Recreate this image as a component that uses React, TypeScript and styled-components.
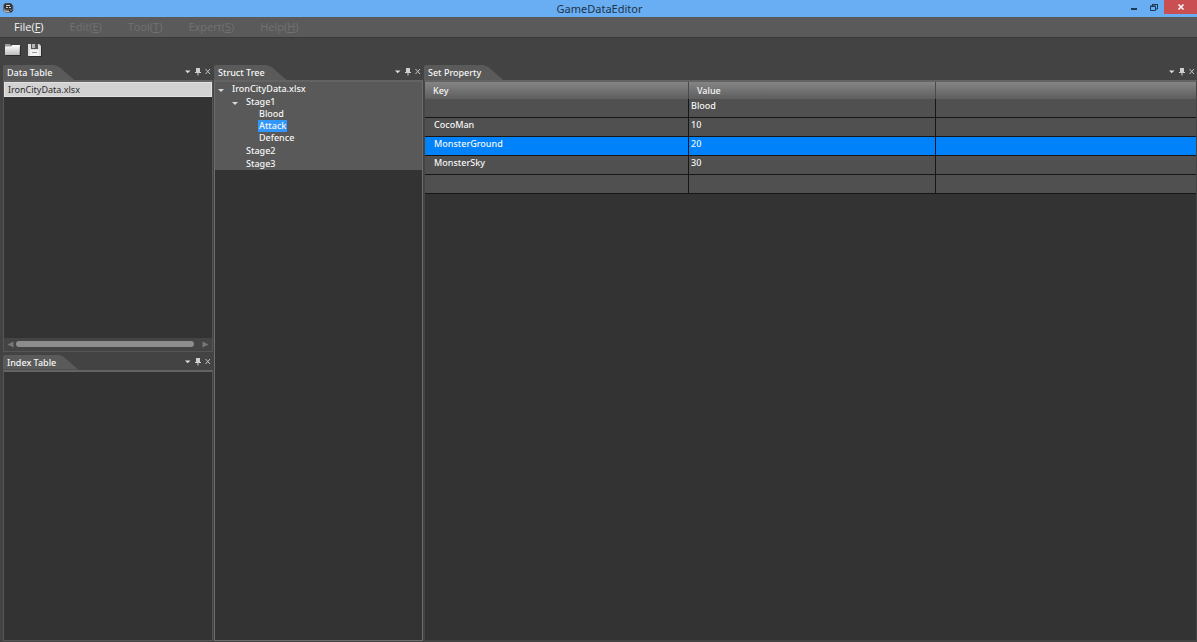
import React from "react";
import styled, { createGlobalStyle } from "styled-components";

const GlobalStyle = createGlobalStyle`
  *, *::before, *::after { box-sizing: border-box; }
  html, body { margin: 0; padding: 0; background: #434343; }
  body { font-family: "Noto Sans", "Open Sans", sans-serif; font-size: 9px; font-weight: 500; color: #f6f6f6; }
  button { font: inherit; color: inherit; background: none; border: 0; padding: 0; }
  ul { list-style: none; margin: 0; padding: 0; }
  svg { display: block; }
`;

const Window = styled.div`
  display: flex;
  flex-direction: column;
  min-height: 100vh;
  background: #434343;
`;

const TitleBar = styled.header`
  display: grid;
  grid-template-columns: 1fr auto 1fr;
  align-items: start;
  height: 17px;
  padding-left: 2px;
  background: #69aef2;
`;

const Title = styled.h1`
  margin: 0;
  font: 400 11px/17px "Noto Sans", "Open Sans", sans-serif;
  color: #1e3348;
`;

const WindowControls = styled.div`
  display: flex;
  justify-content: flex-end;
`;

const WindowButton = styled.button<{ $close?: boolean }>`
  display: flex;
  align-items: center;
  justify-content: center;
  width: ${(p) => (p.$close ? 33 : 20)}px;
  height: 14px;
  background: ${(p) => (p.$close ? "#c94f53" : "transparent")};
`;

const MenuBar = styled.nav`
  display: flex;
  align-items: center;
  gap: 26px;
  height: 21px;
  padding-left: 14px;
  background: #5a5a5a;
  border-bottom: 1px solid #3a3a3a;
`;

const MenuButton = styled.button`
  font: 500 11px/20px "Open Sans", "Noto Sans", sans-serif;
  color: #f4f4f4;
  &:disabled { color: #717171; font-weight: 400; }
`;

const ToolBar = styled.div`
  display: flex;
  align-items: center;
  gap: 5px;
  height: 24px;
  padding: 0 0 2px 4px;
`;

const ToolButton = styled.button`
  width: 17px;
  height: 17px;
`;

const Workspace = styled.main`
  flex: 1;
  display: grid;
  grid-template-columns: 210px 209px 1fr;
  column-gap: 1px;
  padding: 3px 0 1px 3px;
`;

const Dock = styled.div`
  display: flex;
  flex-direction: column;
  gap: 3px;
  min-width: 0;
`;

const PanelFrame = styled.section`
  flex: 1 1 0;
  display: flex;
  flex-direction: column;
  min-width: 0;
`;

const PanelHeader = styled.div`
  display: flex;
  align-items: center;
  justify-content: space-between;
  height: 15px;
`;

const Tab = styled.h2`
  margin: 0;
  padding: 0 22px 0 4px;
  font: 500 9px/15px "Noto Sans", "Open Sans", sans-serif;
  background: #5a5a5a;
  border-top-left-radius: 2px;
  clip-path: polygon(0 0, calc(100% - 20px) 0, calc(100% - 15px) 2px, 100% 100%, 0 100%);
`;

const PanelControls = styled.div`
  display: flex;
  gap: 1px;
  padding: 0 1px 2px 0;
`;

const PanelButton = styled.button`
  width: 9px;
  height: 9px;
`;

const PanelBody = styled.div<{ $edge: string }>`
  flex: 1;
  display: flex;
  flex-direction: column;
  border: 1px solid ${(p) => p.$edge};
  border-top: 2px solid #636363;
  background: #333333;
`;

const FileList = styled.ul`
  flex: 1;
`;

const FileButton = styled.button`
  display: block;
  width: 100%;
  height: 15px;
  padding-left: 3px;
  text-align: left;
  line-height: 14px;
  font-weight: 400;
  color: #2d2d2d;
  background: #d2d2d2;
  border: 1px solid #e2e2e2;
`;

const ScrollStrip = styled.div`
  display: flex;
  align-items: center;
  gap: 2px;
  height: 13px;
  padding: 0 3px;
  background: #444444;
`;

const ScrollArrow = styled.button`
  width: 7px;
  height: 7px;
`;

const ScrollTrack = styled.div`
  flex: 1;
  padding-right: 6px;
`;

const ScrollThumb = styled.div`
  height: 6px;
  border-radius: 3px;
  background: #8d8d8d;
`;

const Tree = styled.ul`
  background: #595959;
`;

const TreeRow = styled.div<{ $level: number }>`
  display: flex;
  align-items: center;
  gap: 6px;
  height: ${(p) => (p.$level === 2 ? 12 : 13)}px;
  padding-left: ${(p) => [2, 16, 29][p.$level]}px;
`;

const Expander = styled.button`
  width: 8px;
  height: 8px;
`;

const LeafSpacer = styled.span`
  width: 8px;
`;

const TreeLabel = styled.span<{ $selected?: boolean }>`
  padding: 0 1px;
  line-height: 12px;
  background: ${(p) => (p.$selected ? "#3197fd" : "transparent")};
`;

const Grid = styled.table`
  width: 100%;
  table-layout: fixed;
  border-collapse: separate;
  border-spacing: 0;
`;

const SizedColumn = styled.col<{ $width: number }>`
  width: ${(p) => p.$width}px;
`;

const HeadCell = styled.th`
  height: 17px;
  padding: 0 8px;
  text-align: left;
  font-weight: 500;
  line-height: 17px;
  background: linear-gradient(#858585, #5e5e5e);
  border-right: 1px solid #4a4a4a;
  &:last-child { border-right: 0; }
`;

const Row = styled.tr<{ $selected?: boolean }>`
  background: ${(p) => (p.$selected ? "#0082fb" : "#505050")};
`;

const Cell = styled.td<{ $indent?: boolean }>`
  height: 19px;
  padding: 0 0 0 ${(p) => (p.$indent ? 9 : 2)}px;
  vertical-align: top;
  line-height: 14px;
  border-right: 1px solid #161616;
  border-bottom: 1px solid #161616;
  &:last-child { border-right: 0; }
`;

const AppIcon = () => (
  <svg width="12" height="16" viewBox="0 0 12 16" aria-hidden="true">
    <path d="M3 3h6l2.500 3v4L9.500 13H4L1 11V5z" fill="#6d7379" />
    <path d="M3 3.500h6l1.500 2v4H4L2 8V5z" fill="#303236" />
    <path d="M4 5.500h4M4 7.500h2M7 7.500h2" stroke="#d2d4d6" fill="none" />
    <path d="M2 10.500l2 1h3" stroke="#b9bdc1" fill="none" />
    <path d="M7 10l2 2 2-2" stroke="#25282c" fill="none" />
  </svg>
);

const FolderIcon = () => (
  <svg width="17" height="17" viewBox="0 0 17 17" aria-hidden="true">
    <defs>
      <linearGradient id="folder" x1="0" y1="0" x2="0" y2="1">
        <stop offset="0" stopColor="#ffffff" />
        <stop offset="1" stopColor="#bdbdbd" />
      </linearGradient>
    </defs>
    <path d="M2 14.500h14.500V5" stroke="#2c2c2c" fill="none" />
    <path d="M1 3h5l1 1.500h9V14H1z" fill="#9a9a9a" />
    <path d="M1 5.500h6L8.500 4H16l-1 10H1z" fill="url(#folder)" />
  </svg>
);

const SaveIcon = () => (
  <svg width="17" height="17" viewBox="0 0 17 17" aria-hidden="true">
    <path d="M3 15.500h12.500V5" stroke="#2c2c2c" fill="none" />
    <path d="M2 3h11l2 2v10H2z" fill="#dedede" />
    <rect x="5" y="3" width="7" height="5" fill="#555555" />
    <rect x="6" y="3" width="3" height="4" fill="#b5b5b5" />
    <rect x="4" y="9" width="9" height="6" fill="#f2f2f2" />
    <path d="M6 11.500h5" stroke="#9b9b9b" />
  </svg>
);

const MinimizeIcon = () => (
  <svg width="8" height="10" viewBox="0 0 8 10" aria-hidden="true">
    <rect x="1" y="6" width="6" height="2" fill="#1d3a57" />
  </svg>
);

const RestoreIcon = () => (
  <svg width="10" height="9" viewBox="0 0 10 9" aria-hidden="true">
    <path d="M1.500 3.500h5v4h-5zM3.500 3V1.500h5V6H7" stroke="#1d3a57" fill="none" />
    <path d="M1 3h6M3 1.500h6" stroke="#1d3a57" />
  </svg>
);

const CloseIcon = () => (
  <svg width="8" height="8" viewBox="0 0 8 8" aria-hidden="true">
    <path d="M1.500 1.500l5 5M6.500 1.500l-5 5" stroke="#fff" strokeWidth="1.500" />
  </svg>
);

const ArrowDown = () => (
  <svg width="9" height="9" viewBox="0 0 9 9" aria-hidden="true">
    <path d="M2 3.500h5.500L4.700 6.300z" fill="#dedede" />
  </svg>
);

const PinIcon = () => (
  <svg width="9" height="9" viewBox="0 0 9 9" aria-hidden="true">
    <path d="M3 1h4v4h1v1H2V5h1zM4.500 6h1v2.500h-1z" fill="#cfcfcf" />
  </svg>
);

const SmallClose = () => (
  <svg width="9" height="9" viewBox="0 0 9 9" aria-hidden="true">
    <path d="M2.500 2l4.500 5M7 2L2.500 7" stroke="#c4c4c4" strokeWidth="1" />
  </svg>
);

const ExpanderIcon = () => (
  <svg width="8" height="8" viewBox="0 0 8 8" aria-hidden="true">
    <path d="M1 4h6L4 7z" fill="#d8d8d8" />
  </svg>
);

const SideArrow = ({ right }: { right?: boolean }) => (
  <svg width="7" height="7" viewBox="0 0 7 7" aria-hidden="true">
    <path d={right ? "M0.500 0.500l6 3-6 3z" : "M6.500 0.500l-6 3 6 3z"} fill="#777" />
  </svg>
);

const menus = [
  { name: "File", key: "F", enabled: true },
  { name: "Edit", key: "E", enabled: false },
  { name: "Tool", key: "T", enabled: false },
  { name: "Expert", key: "S", enabled: false },
  { name: "Help", key: "H", enabled: false },
];

const nodes = [
  { label: "IronCityData.xlsx", level: 0, open: true },
  { label: "Stage1", level: 1, open: true },
  { label: "Blood", level: 2 },
  { label: "Attack", level: 2, selected: true },
  { label: "Defence", level: 2 },
  { label: "Stage2", level: 1 },
  { label: "Stage3", level: 1 },
];

const rows = [
  { key: "", value: "Blood" },
  { key: "CocoMan", value: "10" },
  { key: "MonsterGround", value: "20", selected: true },
  { key: "MonsterSky", value: "30" },
  { key: "", value: "" },
];

interface PanelProps {
  title: string;
  edge?: string;
  children?: React.ReactNode;
}

const Panel = ({ title, edge = "#555555", children }: PanelProps) => (
  <PanelFrame aria-label={title}>
    <PanelHeader>
      <Tab>{title}</Tab>
      <PanelControls>
        <PanelButton aria-label="Panel options"><ArrowDown /></PanelButton>
        <PanelButton aria-label="Pin panel"><PinIcon /></PanelButton>
        <PanelButton aria-label="Close panel"><SmallClose /></PanelButton>
      </PanelControls>
    </PanelHeader>
    <PanelBody $edge={edge}>{children}</PanelBody>
  </PanelFrame>
);

export default function App() {
  return (
    <>
      <GlobalStyle />
      <Window>
        <TitleBar>
          <AppIcon />
          <Title>GameDataEditor</Title>
          <WindowControls>
            <WindowButton aria-label="Minimize"><MinimizeIcon /></WindowButton>
            <WindowButton aria-label="Restore"><RestoreIcon /></WindowButton>
            <WindowButton aria-label="Close" $close><CloseIcon /></WindowButton>
          </WindowControls>
        </TitleBar>
        <MenuBar>
          {menus.map((m) => (
            <MenuButton key={m.name} disabled={!m.enabled}>
              {m.name}(<u>{m.key}</u>)
            </MenuButton>
          ))}
        </MenuBar>
        <ToolBar>
          <ToolButton aria-label="Open"><FolderIcon /></ToolButton>
          <ToolButton aria-label="Save"><SaveIcon /></ToolButton>
        </ToolBar>
        <Workspace>
          <Dock>
            <Panel title="Data Table">
              <FileList>
                <li><FileButton>IronCityData.xlsx</FileButton></li>
              </FileList>
              <ScrollStrip>
                <ScrollArrow aria-label="Scroll left"><SideArrow /></ScrollArrow>
                <ScrollTrack><ScrollThumb /></ScrollTrack>
                <ScrollArrow aria-label="Scroll right"><SideArrow right /></ScrollArrow>
              </ScrollStrip>
            </Panel>
            <Panel title="Index Table" />
          </Dock>
          <Dock>
            <Panel title="Struct Tree" edge="#6c6c6c">
              <Tree role="tree">
                {nodes.map((n) => (
                  <li key={n.label} role="treeitem" aria-level={n.level + 1} aria-selected={!!n.selected}>
                    <TreeRow $level={n.level}>
                      {n.open ? <Expander aria-label="Collapse"><ExpanderIcon /></Expander> : <LeafSpacer />}
                      <TreeLabel $selected={n.selected}>{n.label}</TreeLabel>
                    </TreeRow>
                  </li>
                ))}
              </Tree>
            </Panel>
          </Dock>
          <Dock>
            <Panel title="Set Property" edge="#444444">
              <Grid>
                <colgroup>
                  <SizedColumn $width={264} />
                  <SizedColumn $width={247} />
                  <col />
                </colgroup>
                <thead>
                  <tr>
                    <HeadCell scope="col">Key</HeadCell>
                    <HeadCell scope="col">Value</HeadCell>
                    <HeadCell scope="col" />
                  </tr>
                </thead>
                <tbody>
                  {rows.map((r, i) => (
                    <Row key={i} $selected={r.selected}>
                      <Cell $indent>{r.key}</Cell>
                      <Cell>{r.value}</Cell>
                      <Cell />
                    </Row>
                  ))}
                </tbody>
              </Grid>
            </Panel>
          </Dock>
        </Workspace>
      </Window>
    </>
  );
}
